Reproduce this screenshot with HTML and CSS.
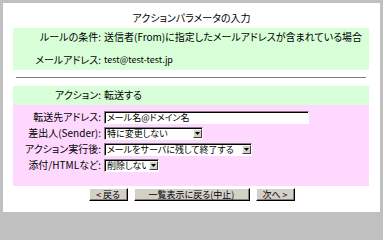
FILE: index.html
```html
<!DOCTYPE html>
<html lang="ja">
<head>
<meta charset="utf-8">
<title>アクションパラメータの入力</title>
<link rel="stylesheet" href="styles.css">
</head>
<body>
<div class="panel">
  <h1 class="title">アクションパラメータの入力</h1>
  <div class="box green cond">
    <span class="lbl">ルールの条件:</span><span class="val">送信者(From)に指定したメールアドレスが含まれている場合</span>
    <span class="lbl">メールアドレス:</span><span class="val small">test@test-test.jp</span>
  </div>
  <hr class="sep">
  <div class="box green action">
    <span class="lbl">アクション:</span><span class="val">転送する</span>
  </div>
  <div class="box pink form">
    <span class="lbl">転送先アドレス:</span>
    <span class="val"><input class="txt" type="text" value="メール名@ドメイン名"></span>
    <span class="lbl">差出人(Sender):</span>
    <span class="val"><span class="selwrap w-sender"><select class="sel"><option>特に変更しない</option></select><span class="arrow"><svg width="5" height="3" viewBox="0 0 5 3"><path d="M0 0H5L2.5 3Z" fill="#000"/></svg></span></span></span>
    <span class="lbl">アクション実行後:</span>
    <span class="val"><span class="selwrap w-after"><select class="sel"><option>メールをサーバに残して終了する</option></select><span class="arrow"><svg width="5" height="3" viewBox="0 0 5 3"><path d="M0 0H5L2.5 3Z" fill="#000"/></svg></span></span></span>
    <span class="lbl">添付/HTMLなど:</span>
    <span class="val"><span class="selwrap w-attach"><select class="sel"><option>削除しない</option></select><span class="arrow"><svg width="5" height="3" viewBox="0 0 5 3"><path d="M0 0H5L2.5 3Z" fill="#000"/></svg></span></span></span>
  </div>
  <div class="buttons">
    <button class="btn w-small" type="button">&lt; 戻る</button>
    <button class="btn w-wide" type="button">一覧表示に戻る(中止)</button>
    <button class="btn w-small" type="button">次へ &gt;</button>
  </div>
</div>
</body>
</html>
```

FILE: styles.css
```css
html, body {
  margin: 0;
  padding: 0;
}
body {
  background: #c0c0c0;
  padding: 3px;
  width: 377px;
  height: 209px;
  font-family: "Noto Sans CJK JP", "Noto Sans", sans-serif;
  font-size: 10px;
  color: #000;
  font-feature-settings: "palt";
}
.panel {
  background: #fff;
  width: 377px;
  height: 209px;
  display: flex;
  flex-direction: column;
  align-items: flex-start;
}
.title {
  margin: 8px 0 3px;
  align-self: center;
  font-size: 10px;
  font-weight: normal;
  line-height: 14px;
  height: 14px;
}
.box {
  margin-left: 10px;
  width: 356px;
  display: grid;
  grid-template-columns: 88px 1fr;
  column-gap: 3px;
  box-sizing: border-box;
}
.green { background: #d8ffd8; }
.pink { background: #ffd8ff; }
.lbl {
  text-align: right;
  white-space: nowrap;
  line-height: 14px;
}
.val {
  white-space: nowrap;
  line-height: 14px;
  display: flex;
  align-items: center;
}
.small { font-size: 9px; }
.cond {
  padding: 2px 0 3px;
  row-gap: 9px;
}
.sep {
  margin: 7px 0 8px 13px;
  width: 350px;
  height: 0;
  border: 0;
  border-top: 1px solid #808080;
}
.action {
  padding: 2px 0 3px;
}
.form {
  padding: 4px 0 13px;
  grid-auto-rows: 16px;
}
.form .lbl { line-height: 16px; }
.form .val { height: 16px; }
.txt {
  width: 205px;
  height: 13px;
  box-sizing: border-box;
  margin: 0;
  padding: 0 2px;
  font-family: inherit;
  font-size: 9px;
  font-feature-settings: "palt";
  border: 1px solid;
  border-color: #808080 #fff #fff #808080;
  box-shadow: inset 1px 1px 0 #000;
  background: #fff;
  outline: none;
}
.selwrap {
  position: relative;
  display: inline-block;
  height: 13px;
}
.w-sender { width: 99px; }
.w-after { width: 148px; }
.w-attach { width: 55px; }
.sel {
  appearance: none;
  -webkit-appearance: none;
  display: block;
  width: 100%;
  height: 13px;
  box-sizing: border-box;
  margin: 0;
  padding: 0 12px 0 2px;
  font-family: inherit;
  font-size: 9px;
  line-height: 11px;
  font-feature-settings: "palt";
  border: 1px solid;
  border-color: #808080 #fff #fff #808080;
  box-shadow: inset 1px 1px 0 #000;
  background: #fff;
  color: #000;
  border-radius: 0;
  outline: none;
}
.arrow {
  position: absolute;
  right: 1px;
  top: 2px;
  width: 9px;
  height: 9px;
  box-sizing: border-box;
  background: #d4d0c8;
  border: 1px solid;
  border-color: #fff #404040 #404040 #fff;
  display: flex;
  align-items: center;
  justify-content: center;
  pointer-events: none;
}
.arrow svg { display: block; }
.buttons {
  align-self: center;
  margin-top: 2px;
  display: flex;
  gap: 6px;
  padding-left: 0;
}
.btn {
  height: 13px;
  box-sizing: border-box;
  margin: 0;
  padding: 0;
  font-family: inherit;
  font-size: 9px;
  line-height: 11px;
  font-feature-settings: "palt";
  background: #d4d0c8;
  color: #000;
  border: 1px solid;
  border-color: #fff #000 #000 #fff;
  box-shadow: inset -1px -1px 0 #808080;
  border-radius: 0;
}
.w-small { width: 39px; }
.w-wide { width: 116px; }
```
